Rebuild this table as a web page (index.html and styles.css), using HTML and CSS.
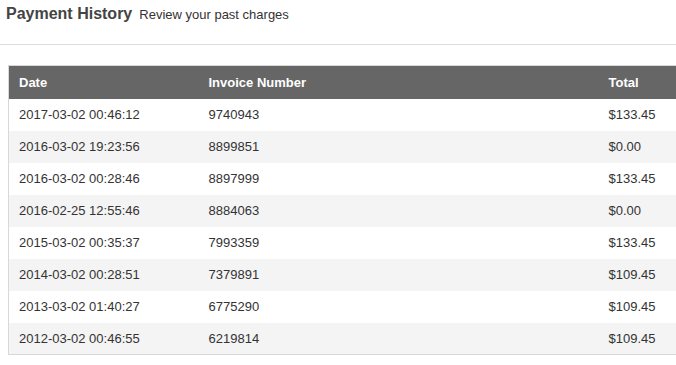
FILE: index.html
```
<!DOCTYPE html>
<html>
<head>
<meta charset="utf-8">
<link rel="stylesheet" href="styles.css">
</head>
<body>
<div class="page-header">
  <h1 class="title">Payment History</h1>
  <span class="subtitle">Review your past charges</span>
</div>
<div class="table-wrap">
<table class="history">
  <thead>
    <tr><th class="c-date">Date</th><th class="c-inv">Invoice Number</th><th class="c-total">Total</th></tr>
  </thead>
  <tbody>
    <tr><td>2017-03-02 00:46:12</td><td>9740943</td><td>$133.45</td></tr>
    <tr><td>2016-03-02 19:23:56</td><td>8899851</td><td>$0.00</td></tr>
    <tr><td>2016-03-02 00:28:46</td><td>8897999</td><td>$133.45</td></tr>
    <tr><td>2016-02-25 12:55:46</td><td>8884063</td><td>$0.00</td></tr>
    <tr><td>2015-03-02 00:35:37</td><td>7993359</td><td>$133.45</td></tr>
    <tr><td>2014-03-02 00:28:51</td><td>7379891</td><td>$109.45</td></tr>
    <tr><td>2013-03-02 01:40:27</td><td>6775290</td><td>$109.45</td></tr>
    <tr><td>2012-03-02 00:46:55</td><td>6219814</td><td>$109.45</td></tr>
  </tbody>
</table>
</div>
</body>
</html>
```
FILE: styles.css
```
html, body {
  margin: 0;
  padding: 0;
  overflow: hidden;
  background: #fff;
  font-family: "Liberation Sans", Arial, sans-serif;
}
.page-header {
  display: flex;
  align-items: baseline;
  gap: 7px;
  padding: 5px 6px 0;
  height: 45px;
  box-sizing: border-box;
  border-bottom: 1px solid #dcdcdc;
  width: 676px;
}
.title {
  margin: 0;
  font-size: 16px;
  font-weight: bold;
  color: #444;
}
.subtitle {
  font-size: 13px;
  color: #333;
}
.table-wrap {
  padding: 20px 0 0 8px;
}
.history {
  border-collapse: collapse;
  width: 700px;
  border: 1px solid #d8d8d8;
  font-size: 13px;
  color: #333;
}
.history th {
  background: #666;
  color: #fff;
  font-weight: bold;
  text-align: left;
  height: 33px;
  padding: 0 10px;
  box-sizing: border-box;
}
.history td {
  height: 32px;
  padding: 0 10px;
  box-sizing: border-box;
}
.history tbody tr:nth-child(even) td {
  background: #f4f4f4;
}
.c-date { width: 190px; }
.c-inv { width: 400px; }
```
